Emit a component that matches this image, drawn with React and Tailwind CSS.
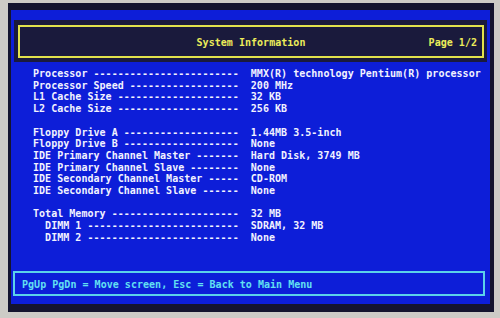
import React from "react";

const rows = [
  ["Processor", "MMX(R) technology Pentium(R) processor", 0],
  ["Processor Speed", "200 MHz", 0],
  ["L1 Cache Size", "32 KB", 0],
  ["L2 Cache Size", "256 KB", 0],
  null,
  ["Floppy Drive A", "1.44MB 3.5-inch", 0],
  ["Floppy Drive B", "None", 0],
  ["IDE Primary Channel Master", "Hard Disk, 3749 MB", 0],
  ["IDE Primary Channel Slave", "None", 0],
  ["IDE Secondary Channel Master", "CD-ROM", 0],
  ["IDE Secondary Channel Slave", "None", 0],
  null,
  ["Total Memory", "32 MB", 0],
  ["DIMM 1", "SDRAM, 32 MB", 2],
  ["DIMM 2", "None", 2],
];

function line(r) {
  if (!r) return " ";
  const [label, value, indent] = r;
  let s = " ".repeat(indent) + label + " ";
  s += "-".repeat(Math.max(0, 34 - s.length));
  return s + "  " + value;
}

export default function App() {
  return (
    <div className="w-[500px] h-[318px] bg-[#cdcbc6] pl-[8px] pt-[3px] pr-[6px] pb-[6px] flex overflow-hidden font-['DejaVu_Sans_Mono',monospace] font-bold text-[10px] tracking-[0.03px]">
      <div className="flex-1 bg-[#14142e] pl-[3px] pr-[4px] pt-[7px] pb-[8px] flex">
        <div className="flex-1 bg-[#0d1ed8] flex flex-col">
          <div className="mt-[10px] ml-[3px] mr-[3px] h-[42px] bg-[#1a1a3c] pt-[5px] pb-[4px] pl-[4px] pr-[3px] flex">
            <div className="flex-1 border-2 border-[#e2e24c] grid grid-cols-[1fr_auto_1fr] items-center pt-[2px] text-[#ecec5a]">
              <div />
              <div className="whitespace-pre">System Information</div>
              <div className="justify-self-end pr-[5px] whitespace-pre">Page 1/2</div>
            </div>
          </div>
          <div className="mt-[6px] pl-[22px] text-[#f2f2ff] leading-[11.7px] whitespace-pre">
            {rows.map((r, i) => (
              <div key={i}>{line(r)}</div>
            ))}
          </div>
          <div className="mt-auto mb-[8px] ml-[2px] mr-[5px] h-[25px] border-2 border-[#5cd2ea] flex items-center pl-[7px] pt-[1px] text-[#62e0f2] whitespace-pre">
            PgUp PgDn = Move screen, Esc = Back to Main Menu
          </div>
        </div>
      </div>
    </div>
  );
}
